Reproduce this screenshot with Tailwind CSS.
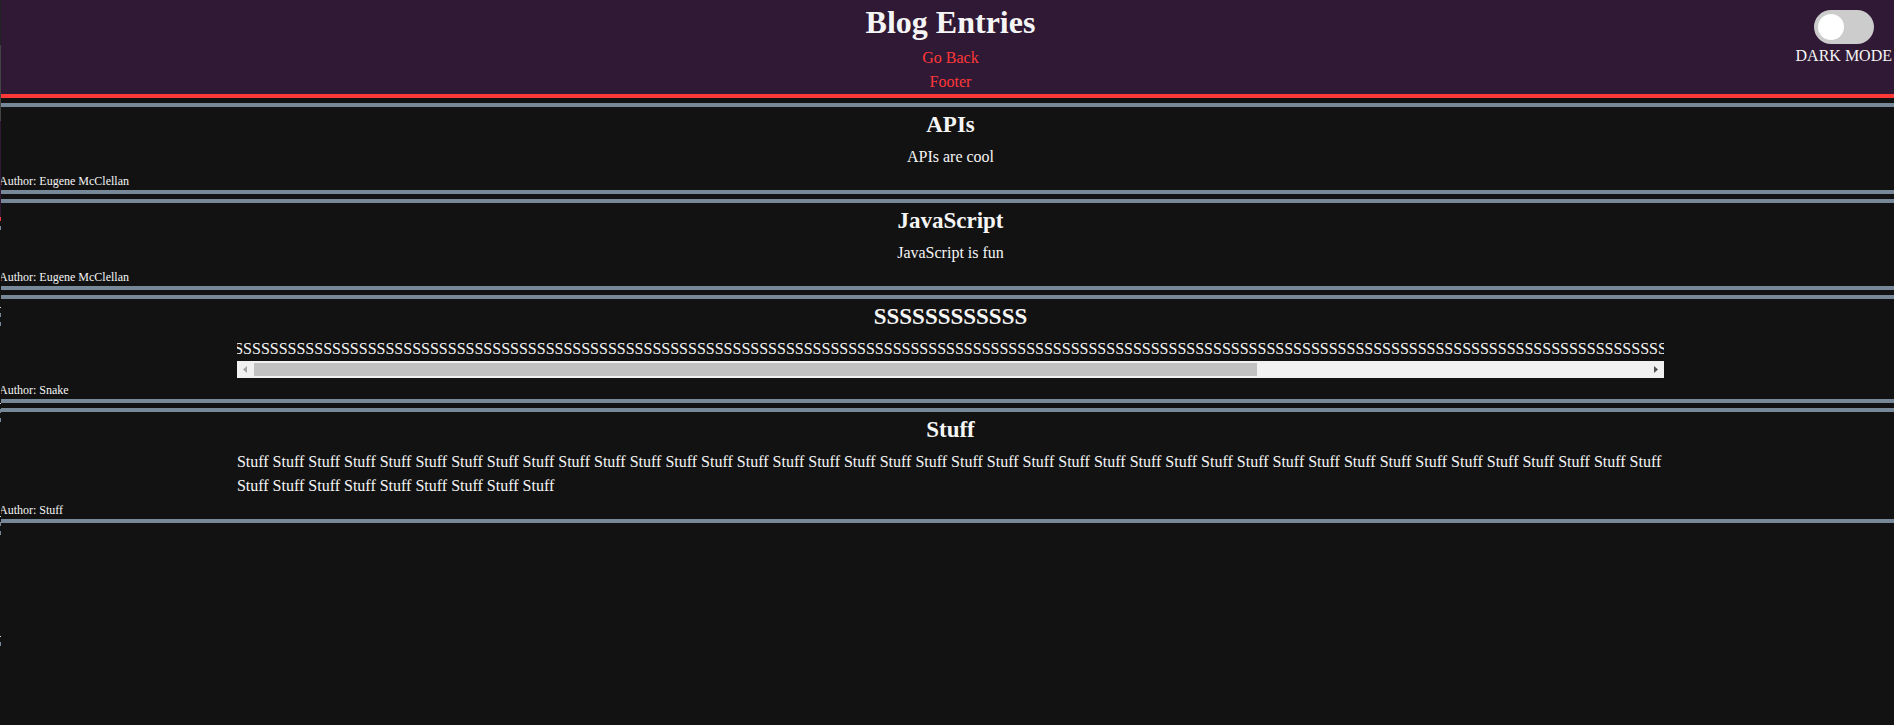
<!DOCTYPE html>
<html lang="en">
<head>
<meta charset="utf-8">
<title>Blog Entries</title>
<script src="https://cdn.jsdelivr.net/npm/@tailwindcss/browser@4"></script>
</head>
<body class="relative min-h-screen overflow-x-hidden bg-[#121212] font-['Liberation_Serif',serif] text-base leading-6 text-[#f5f5f5]">
<div class="-ml-px w-[calc(100%+9px)] text-center">
  <header class="border-b-4 border-[#ff3838] bg-[#301934]">
    <h1 class="pb-[5px] pt-[3px] text-[32px] font-bold leading-[38px]">Blog Entries</h1>
    <nav class="flex flex-col items-center text-[#ff3838]">
      <a href="#back">Go Back</a>
      <a href="#footer">Footer</a>
    </nav>
  </header>
  <main class="flex flex-col gap-[5px] pt-[5px]">
    <article class="border-y-4 border-[#778899]">
      <h2 class="pb-[3px] text-[23px] font-bold leading-[35px]">APIs</h2>
      <p>APIs are cool</p>
      <footer class="h-[21px] text-left text-xs leading-6">Author: Eugene McClellan</footer>
    </article>
    <article class="border-y-4 border-[#778899]">
      <h2 class="pb-[3px] text-[23px] font-bold leading-[35px]">JavaScript</h2>
      <p>JavaScript is fun</p>
      <footer class="h-[21px] text-left text-xs leading-6">Author: Eugene McClellan</footer>
    </article>
    <article class="border-y-4 border-[#778899]">
      <h2 class="pb-[3px] text-[23px] font-bold leading-[35px]">SSSSSSSSSSSS</h2>
      <div class="mx-auto w-3/4">
        <p id="hiss" class="flex justify-center overflow-hidden"></p>
        <div class="flex h-[17px] bg-[#f1f1f1]">
          <button type="button" aria-label="Scroll left" class="flex w-[17px] items-center justify-center"><svg class="h-[7px] w-1 fill-[#a3a3a3]" viewBox="0 0 4 7"><path d="M4 0v7L0 3.5z"/></svg></button>
          <div class="flex-1 py-0.5"><div class="h-full w-[72%] bg-[#c1c1c1]"></div></div>
          <button type="button" aria-label="Scroll right" class="flex w-[17px] items-center justify-center"><svg class="h-[7px] w-1 fill-[#505050]" viewBox="0 0 4 7"><path d="M0 0v7l4-3.5z"/></svg></button>
        </div>
      </div>
      <footer class="h-[21px] text-left text-xs leading-6">Author: Snake</footer>
    </article>
    <article class="border-y-4 border-[#778899]">
      <h2 class="pb-[3px] text-[23px] font-bold leading-[35px]">Stuff</h2>
      <p class="mx-auto w-3/4 text-left">Stuff Stuff Stuff Stuff Stuff Stuff Stuff Stuff Stuff Stuff Stuff Stuff Stuff Stuff Stuff Stuff Stuff Stuff Stuff Stuff Stuff Stuff Stuff Stuff Stuff Stuff Stuff Stuff Stuff Stuff Stuff Stuff Stuff Stuff Stuff Stuff Stuff Stuff Stuff Stuff Stuff Stuff Stuff Stuff Stuff Stuff Stuff Stuff Stuff</p>
      <footer class="h-[21px] text-left text-xs leading-6">Author: Stuff</footer>
    </article>
  </main>
</div>
<label class="absolute right-0.5 top-2.5 flex cursor-pointer flex-col items-center">
  <input type="checkbox" class="peer sr-only">
  <span class="h-[34px] w-[60px] rounded-full bg-[#cccccc] p-1 peer-checked:pl-[30px]"><span class="block size-[26px] rounded-full bg-white"></span></span>
  <span>DARK MODE</span>
</label>
<!-- Edge of the panel to the left of the page -->
<div class="absolute left-0 top-0 h-full w-px bg-[#121212] bg-[linear-gradient(#222_45px,#444_45px_121px,#301934_121px_217px,#ff3838_217px_221px,#121212_221px_226px,#778899_226px_230px,#121212_230px_307px,#cde_307px_308px,#121212_308px_313px,#778899_313px_317px,#121212_317px_322px,#778899_322px_326px,#121212_326px_403px,#cde_403px_404px,#121212_404px_409px,#778899_409px_413px,#121212_413px_418px,#778899_418px_422px,#121212_422px_516px,#cde_516px_517px,#121212_517px_522px,#778899_522px_526px,#121212_526px_531px,#778899_531px_535px,#121212_535px_636px,#cde_636px_637px,#121212_637px_642px,#778899_642px_646px,#121212_646px)]"></div>
<script>
document.getElementById('hiss').textContent = 'S'.repeat(223);
</script>
</body>
</html>
